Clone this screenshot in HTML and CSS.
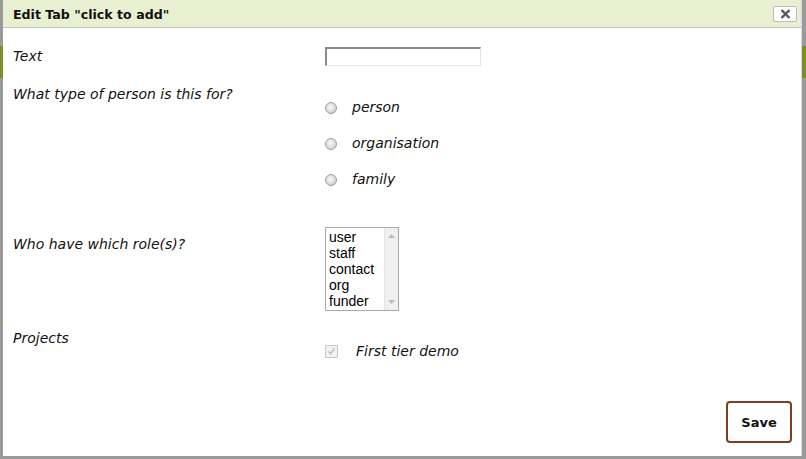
FILE: index.html
```html
<!DOCTYPE html>
<html>
<head>
<meta charset="utf-8">
<link rel="stylesheet" href="styles.css">
</head>
<body>
<div class="backdrop">
  <div class="band"></div>
</div>
<div class="dialog">
  <div class="titlebar">
    <span class="title">Edit Tab "click to add"</span>
    <button class="close" type="button"><svg width="11" height="10" viewBox="0 0 11 10"><path d="M1.5 1 L9.5 9 M9.5 1 L1.5 9" stroke="#555" stroke-width="2.4"/></svg></button>
  </div>
  <div class="body">
    <div class="row row-text">
      <div class="label">Text</div>
      <div class="ctrl"><input class="textin" type="text"></div>
    </div>
    <div class="row row-type">
      <div class="label">What type of person is this for?</div>
      <div class="ctrl radios">
        <label class="opt"><span class="radio"></span><span class="optlabel">person</span></label>
        <label class="opt"><span class="radio"></span><span class="optlabel">organisation</span></label>
        <label class="opt"><span class="radio"></span><span class="optlabel">family</span></label>
      </div>
    </div>
    <div class="row row-roles">
      <div class="label">Who have which role(s)?</div>
      <div class="ctrl">
        <div class="listbox">
          <ul class="items">
            <li>user</li><li>staff</li><li>contact</li><li>org</li><li>funder</li>
          </ul>
          <div class="scroll">
            <svg class="arr" width="7" height="4" viewBox="0 0 7 4"><path d="M0 4 L3.5 0 L7 4Z" fill="#bbb"/></svg>
            <svg class="arr" width="7" height="4" viewBox="0 0 7 4"><path d="M0 0 L3.5 4 L7 0Z" fill="#bbb"/></svg>
          </div>
        </div>
      </div>
    </div>
    <div class="row row-proj">
      <div class="label">Projects</div>
      <div class="ctrl">
        <label class="opt check"><span class="cbox"><svg width="9" height="9" viewBox="0 0 9 9"><path d="M1.5 4.5 L3.5 7 L7.5 1.5" fill="none" stroke="#bbb" stroke-width="1.3"/></svg></span><span class="optlabel">First tier demo</span></label>
      </div>
    </div>
    <div class="footer">
      <button class="save" type="button">Save</button>
    </div>
  </div>
</div>
</body>
</html>
```
FILE: styles.css
```css
html, body {
  margin: 0;
  padding: 0;
}
body {
  width: 806px;
  height: 459px;
  background: #9a9a9a;
  overflow: hidden;
  position: relative;
  font-family: "DejaVu Sans", Verdana, sans-serif;
  color: #111;
}
.backdrop {
  padding-top: 46px;
}
.band {
  height: 32px;
  background: #7d8d2a;
}
.dialog {
  position: absolute;
  left: 3px;
  top: 0;
  width: 799px;
  height: 456px;
  background: #fff;
  border-right: 1px solid #d8d8d8;
  box-sizing: border-box;
  display: flex;
  flex-direction: column;
}
.titlebar {
  height: 28px;
  background: #e9f0d1;
  border-bottom: 1px solid #c4c4c4;
  box-sizing: border-box;
  display: flex;
  align-items: center;
  justify-content: space-between;
  padding: 1px 4px 0 10px;
}
.title {
  font-weight: bold;
  font-size: 12.6px;
  font-family: "DejaVu Sans", sans-serif;
  color: #111;
}
.close {
  width: 24px;
  height: 16px;
  padding: 0;
  margin: 0;
  background: #fff;
  border: 1px solid #bdbdbd;
  border-radius: 2px;
  display: flex;
  align-items: center;
  justify-content: center;
}
.body {
  flex: 1;
  display: flex;
  flex-direction: column;
  padding: 0 9px 0 10px;
  font-style: italic;
  font-size: 14px;
  line-height: 17px;
}
.row {
  display: flex;
  box-sizing: border-box;
}
.label {
  width: 312px;
  flex: none;
}
.row-text {
  padding-top: 20px;
  height: 52px;
}
.textin {
  display: block;
  width: 156px;
  height: 19px;
  box-sizing: border-box;
  margin: 0;
  margin-top: -1px;
  border: 1px solid #e5e5e5;
  border-top: 2px solid #8a8a8a;
  border-left: 2px solid #8a8a8a;
  background: #fff;
  outline: none;
}
.row-type {
  height: 147px;
  padding-top: 6px;
}
.radios {
  display: flex;
  flex-direction: column;
  gap: 19px;
  padding-top: 13px;
}
.opt {
  display: flex;
  align-items: center;
  height: 17px;
}
.radio {
  width: 12px;
  height: 12px;
  border-radius: 50%;
  border: 1px solid #9c9c9c;
  background: radial-gradient(circle at 45% 40%, #fafafa 0%, #e2e2e2 45%, #c4c4c4 100%);
  box-sizing: border-box;
  margin-right: 15px;
}
.row-roles {
  height: 94px;
}
.row-roles .label {
  padding-top: 9px;
}
.listbox {
  width: 74px;
  height: 84px;
  border: 1px solid #a9a9a9;
  box-sizing: border-box;
  display: flex;
  font-style: normal;
  font-family: "Liberation Sans", Arial, sans-serif;
  font-size: 14px;
  color: #000;
}
.items {
  list-style: none;
  margin: 0;
  padding: 1px 0 0 3px;
  flex: 1;
  line-height: 16px;
}
.scroll {
  width: 13px;
  background: #f0f0f0;
  border-left: 1px solid #e4e4e4;
  display: flex;
  flex-direction: column;
  justify-content: space-between;
  align-items: center;
  padding: 6px 0 6px;
}
.row-proj {
  height: 80px;
  padding-top: 9px;
}
.row-proj .ctrl {
  padding-top: 13px;
}
.cbox {
  width: 13px;
  height: 13px;
  border: 1px solid #c8c8c8;
  background: #f2f2f2;
  box-sizing: border-box;
  display: flex;
  align-items: center;
  justify-content: center;
  margin-right: 18px;
}
.footer {
  display: flex;
  justify-content: flex-end;
}
.save {
  width: 66px;
  height: 42px;
  border: 2px solid #7b3f22;
  border-radius: 4px;
  background: #fff;
  font-family: "DejaVu Sans", sans-serif;
  font-weight: bold;
  font-size: 13px;
  color: #111;
  margin: 0;
}
```
